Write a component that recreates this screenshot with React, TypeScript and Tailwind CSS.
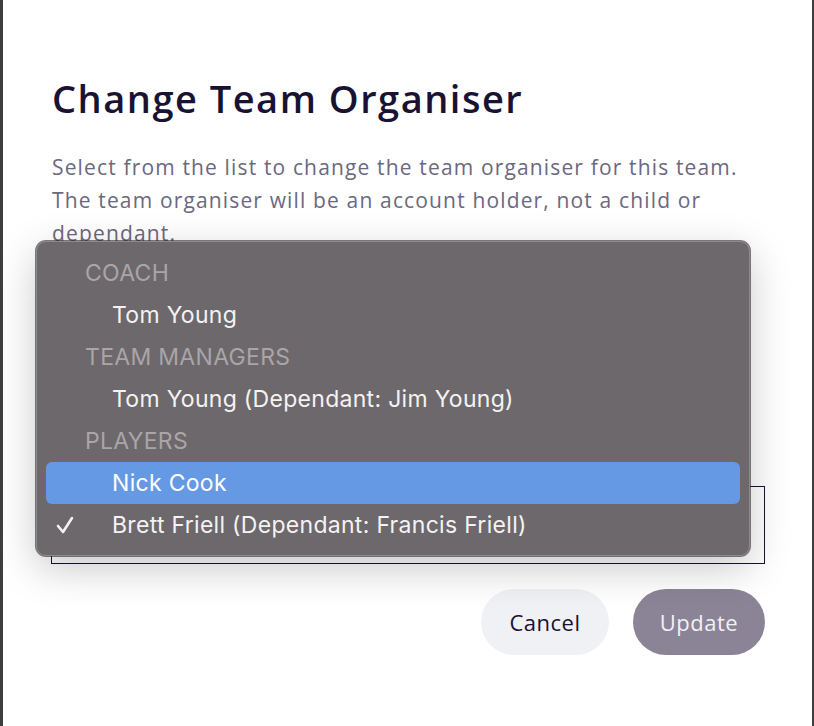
import React from "react";

const sys = { fontFamily: "Inter, 'Noto Sans', sans-serif" };

export default function App() {
  return (
    <div className="w-[814px] h-[726px] bg-[#3e3e3e] flex overflow-hidden">
      <div
        className="relative ml-[3px] w-[809px] shrink-0 bg-white flex flex-col pl-[49px] pr-[47px] pt-[75px] overflow-hidden"
        style={{ fontFamily: "'Open Sans', Lato, sans-serif" }}
      >
        <h1 className="text-[38px] leading-[46px] font-semibold text-[#1a1233] tracking-[1.5px] whitespace-nowrap">
          Change Team Organiser
        </h1>
        <p className="mt-[30px] text-[21px] leading-[33px] text-[#6b6880] tracking-[1.15px] whitespace-nowrap">
          Select from the list to change the team organiser for this team.
          <br />
          The team organiser will be an account holder, not a child or
          <br />
          dependant.
        </p>
        <div className="mt-[236px] ml-[-1px] w-[714px] h-[78px] border border-[#1a1233]" />
        <div className="flex justify-end gap-[24px] mt-[25px]">
          <button className="h-[66px] w-[128px] rounded-full bg-[#f0f1f5] text-[22px] text-[#1a1233] tracking-[0.5px]">
            Cancel
          </button>
          <button className="h-[66px] w-[132px] rounded-full bg-[#8a8496] text-[22px] text-[#f2f0f5] tracking-[0.5px]">
            Update
          </button>
        </div>

        <div
          className="absolute left-[33px] top-[241px] w-[714px] h-[315px] rounded-[10px] bg-[#6d686b] border border-[#8f8b8d] shadow-[0_0_0_1px_rgba(40,40,40,0.6),0_12px_40px_rgba(0,0,0,0.22)] px-[9px] pt-[10px]"
          style={sys}
        >
          <div className="h-[42px] flex items-center pl-[39px] text-[23px] tracking-[0.3px] text-[#a9a5a8]">COACH</div>
          <div className="h-[42px] flex items-center pl-[66px] text-[23px] tracking-[0.3px] text-[#f4f3f4]">Tom Young</div>
          <div className="h-[42px] flex items-center pl-[39px] text-[23px] tracking-[0.3px] text-[#a9a5a8]">TEAM MANAGERS</div>
          <div className="h-[42px] flex items-center pl-[66px] text-[23px] tracking-[0.3px] text-[#f4f3f4]">Tom Young (Dependant: Jim Young)</div>
          <div className="h-[42px] flex items-center pl-[39px] text-[23px] tracking-[0.3px] text-[#a9a5a8]">PLAYERS</div>
          <div className="h-[42px] flex items-center pl-[66px] text-[23px] tracking-[0.3px] text-white bg-[#6699e3] rounded-[6px]">Nick Cook</div>
          <div className="relative h-[42px] flex items-center pl-[66px] text-[23px] tracking-[0.3px] text-[#f4f3f4]">
            <svg className="absolute left-[9px] top-[11px]" width="20" height="20" viewBox="0 0 20 20">
              <path d="M3 11 L8 17 L17 3" fill="none" stroke="#f4f3f4" strokeWidth="2.6" strokeLinecap="round" strokeLinejoin="round" />
            </svg>
            Brett Friell (Dependant: Francis Friell)
          </div>
        </div>
      </div>
    </div>
  );
}
